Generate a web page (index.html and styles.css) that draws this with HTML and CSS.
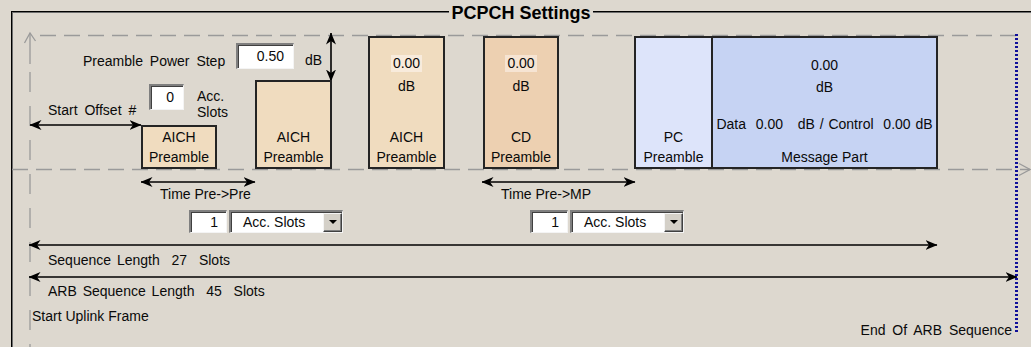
FILE: index.html
```html
<!DOCTYPE html>
<html>
<head>
<meta charset="utf-8">
<link rel="stylesheet" href="styles.css">
</head>
<body>
<div class="stage">
  <div class="frame"></div>
  <div class="title">PCPCH Settings</div>

  <svg class="lines" width="1031" height="347" viewBox="0 0 1031 347">
    <defs>
      <marker id="ah" viewBox="0 0 12 10" refX="11.5" refY="5" markerWidth="12" markerHeight="10" markerUnits="userSpaceOnUse" orient="auto-start-reverse">
        <path d="M0 0 L12 5 L0 10 L3.5 5 Z" fill="#000"/>
      </marker>
    </defs>
    <g class="grey">
      <line x1="30" y1="33" x2="30" y2="64"/>
      <line class="dash vdash" x1="30" y1="72" x2="30" y2="347"/>
      <polyline points="24.5,43 30,33 35.5,41" />
      <line class="dash" x1="40" y1="35.5" x2="1016" y2="35.5"/>
      <line class="dash" x1="12" y1="169.5" x2="1030" y2="169.5"/>
      <polyline points="1019,163.5 1030,169.5 1019,175.5" />
    </g>
    <line class="blue" x1="1016.5" y1="34" x2="1016.5" y2="334"/>
    <g class="arrows">
      <line x1="30" y1="125" x2="141" y2="125"/>
      <line x1="331" y1="33" x2="331" y2="81"/>
      <line x1="141" y1="182" x2="255" y2="182"/>
      <line x1="482" y1="182" x2="635" y2="182"/>
      <line x1="29" y1="245" x2="937" y2="245"/>
      <line x1="29" y1="277" x2="1017" y2="277"/>
    </g>
  </svg>

  <div class="t l-pps">Preamble Power Step</div>
  <div class="field f-step">0.50</div>
  <div class="t l-db">dB</div>

  <div class="field f-off">0</div>
  <div class="t l-acc">Acc.
Slots</div>
  <div class="t l-so">Start Offset #</div>

  <div class="box aich b1">
    <div class="cap">AICH<br>Preamble</div>
  </div>
  <div class="box aich b2">
    <div class="cap">AICH<br>Preamble</div>
  </div>
  <div class="box aich b3">
    <div class="val">0.00</div>
    <div class="unit">dB</div>
    <div class="cap">AICH<br>Preamble</div>
  </div>
  <div class="box cd b4">
    <div class="val">0.00</div>
    <div class="unit">dB</div>
    <div class="cap">CD<br>Preamble</div>
  </div>
  <div class="box b5">
    <div class="pc">
      <div class="cap">PC<br>Preamble</div>
    </div>
    <div class="msg">
      <div class="mval">0.00</div>
      <div class="unit">dB</div>
      <div class="data">Data  0.00   dB / Control  0.00 dB</div>
      <div class="cap">Message Part</div>
    </div>
  </div>

  <div class="t l-tpp">Time Pre-&gt;Pre</div>
  <div class="t l-tpm">Time Pre-&gt;MP</div>

  <div class="combo c1">
    <div class="num">1</div>
    <div class="sel"><span>Acc. Slots</span><span class="btn"><span class="tri"></span></span></div>
  </div>
  <div class="combo c2">
    <div class="num">1</div>
    <div class="sel"><span>Acc. Slots</span><span class="btn"><span class="tri"></span></span></div>
  </div>

  <div class="t l-seq">Sequence Length  27  Slots</div>
  <div class="t l-arb">ARB Sequence Length  45  Slots</div>
  <div class="t l-suf">Start Uplink Frame</div>
  <div class="t l-end">End Of ARB Sequence</div>
</div>
</body>
</html>
```

FILE: styles.css
```css
body {
  margin: 0;
  background: #ddd8cf;
  font-family: "Liberation Sans", Arial, sans-serif;
  font-size: 14px;
  color: #0a0a0a;
}

.stage {
  position: relative;
  width: 1031px;
  height: 347px;
  overflow: hidden;
}

.frame {
  margin: 11px 0 0 11px;
  height: 400px;
  border-top: 1px solid #000;
  border-left: 1px solid #000;
  box-shadow: inset 1px 1px 0 #6e6e6e;
}

.title {
  position: absolute;
  left: 449px;
  top: 3px;
  width: 144px;
  text-align: center;
  background: #ddd8cf;
  font-weight: bold;
  font-size: 18px;
  line-height: 20px;
  color: #000;
}

.lines {
  position: absolute;
  left: 0;
  top: 0;
}

.grey line,
.grey polyline {
  stroke: #9a9a9a;
  stroke-width: 1.3;
  fill: none;
}

.grey .dash {
  stroke-dasharray: 16 8;
}

.grey .vdash {
  stroke-dasharray: 20 14;
}

.blue {
  stroke: #10109a;
  stroke-width: 3;
  stroke-dasharray: 2 2;
}

.arrows line {
  stroke: #000;
  stroke-width: 1.6;
  marker-start: url(#ah);
  marker-end: url(#ah);
}

.t {
  position: absolute;
  line-height: 16px;
  white-space: pre;
  word-spacing: 3px;
}

.l-pps { left: 83px; top: 53px; }
.l-db { left: 305px; top: 52px; }
.l-acc { left: 197px; top: 88px; word-spacing: 0; }
.l-so { left: 48px; top: 102px; }
.l-tpp { left: 160px; top: 186px; word-spacing: 0; }
.l-tpm { left: 501px; top: 186px; word-spacing: 0; }
.l-seq { left: 48px; top: 252px; word-spacing: 2px; }
.l-arb { left: 48px; top: 283px; word-spacing: 2px; }
.l-suf { left: 32px; top: 308px; word-spacing: 0; }
.l-end { right: 19px; top: 322px; word-spacing: 3px; }

.field,
.num,
.sel {
  box-sizing: border-box;
  background: #fff;
  border-style: solid;
  border-width: 2px 1px 1px 2px;
  border-color: #7f7f7f #f4f4f4 #f4f4f4 #7f7f7f;
  box-shadow: inset 1px 1px 0 #404040;
}

.field {
  position: absolute;
  text-align: right;
  line-height: 23px;
}

.f-step { left: 236px; top: 43px; width: 58px; height: 26px; padding-right: 9px; }
.f-off { left: 149px; top: 84px; width: 35px; height: 26px; padding-right: 9px; }

.box {
  position: absolute;
  box-sizing: border-box;
  border: 2px solid #242424;
  display: flex;
  flex-direction: column;
  align-items: center;
  text-align: center;
}

.aich { background: #f0dcbf; }
.cd { background: #edd0b1; }

.b1 { left: 141px; top: 125px; width: 76px; height: 44px; }
.b2 { left: 255px; top: 80px; width: 77px; height: 89px; }
.b3 { left: 368px; top: 36px; width: 77px; height: 133px; }
.b4 { left: 483px; top: 36px; width: 76px; height: 133px; }
.b5 {
  left: 634px;
  top: 36px;
  width: 304px;
  height: 133px;
  flex-direction: row;
  align-items: stretch;
}

.cap {
  margin-top: auto;
  line-height: 20px;
}

.val {
  margin-top: 17px;
  line-height: 17px;
  padding: 0 2px;
  background: #f8ebdc;
}

.cd .val { background: #f6e4d3; }

.unit {
  margin-top: 6px;
  line-height: 16px;
}

.pc {
  width: 75px;
  background: #dde4fa;
  border-right: 2px solid #242424;
  display: flex;
  flex-direction: column;
  align-items: center;
}

.msg {
  flex: 1;
  background: #c6d3f3;
  display: flex;
  flex-direction: column;
  align-items: center;
}

.mval {
  margin-top: 19px;
  line-height: 16px;
}

.data {
  margin-top: 21px;
  line-height: 16px;
  white-space: pre;
  word-spacing: 1px;
}

.combo {
  position: absolute;
  top: 210px;
  height: 23px;
  display: flex;
  gap: 2px;
}

.c1 { left: 189px; }
.c2 { left: 530px; }

.num {
  width: 38px;
  text-align: right;
  padding-right: 8px;
  line-height: 20px;
}

.sel {
  width: 114px;
  display: flex;
  align-items: center;
  justify-content: space-between;
  padding-left: 12px;
  line-height: 20px;
}

.btn {
  width: 19px;
  height: 19px;
  box-sizing: border-box;
  background: #d4d0c8;
  border-style: solid;
  border-width: 1px;
  border-color: #f4f4f4 #404040 #404040 #f4f4f4;
  box-shadow: inset -1px -1px 0 #808080;
  display: flex;
  align-items: center;
  justify-content: center;
}

.tri {
  width: 0;
  height: 0;
  border-left: 4px solid transparent;
  border-right: 4px solid transparent;
  border-top: 4px solid #000;
}
```
